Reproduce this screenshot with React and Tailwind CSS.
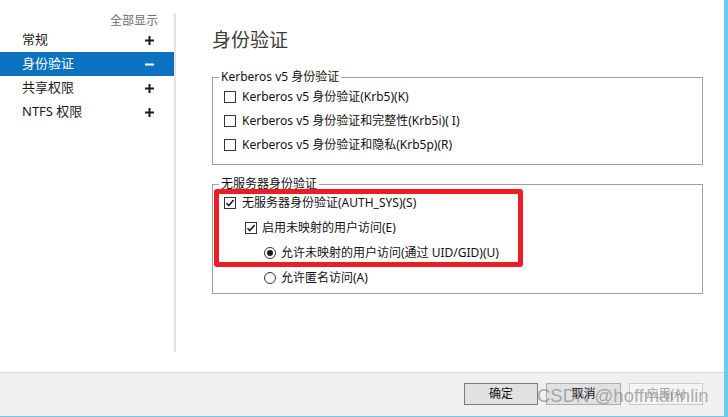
import React from "react";

const FONT = { fontFamily: '"Noto Sans", "Noto Sans CJK SC", sans-serif' };

function Plus() {
  return (
    <svg width="9" height="9" viewBox="0 0 9 9">
      <path d="M4.5 0v9M0 4.5h9" stroke="#1a1a1a" strokeWidth="2" />
    </svg>
  );
}

function Minus() {
  return (
    <svg width="9" height="9" viewBox="0 0 9 9">
      <path d="M0 4.5h9" stroke="#ffffff" strokeWidth="2" />
    </svg>
  );
}

function Check({ checked }) {
  return (
    <span className="w-[12px] h-[12px] border border-[#333] bg-white flex items-center justify-center shrink-0">
      {checked && (
        <svg width="10" height="10" viewBox="0 0 10 10">
          <path d="M1.5 5.2l2.3 2.4L8.6 2" fill="none" stroke="#1a1a1a" strokeWidth="1.6" />
        </svg>
      )}
    </span>
  );
}

function Radio({ checked }) {
  return (
    <span className="w-[12px] h-[12px] rounded-full border border-[#333] bg-white flex items-center justify-center shrink-0">
      {checked && <span className="w-[6px] h-[6px] rounded-full bg-[#1a1a1a]" />}
    </span>
  );
}

function Row({ children, label }) {
  return (
    <div className="flex items-center gap-[6px] h-[24px]">
      {children}
      <span className="text-[12px] text-[#111] whitespace-nowrap">{label}</span>
    </div>
  );
}

const navItems = [
  { label: "常规", open: false },
  { label: "身份验证", open: true },
  { label: "共享权限", open: false },
  { label: "NTFS 权限", open: false },
];

export default function App() {
  return (
    <div
      className="w-[728px] h-[417px] flex flex-col bg-white border-r-4 border-b border-[#6ccaec] overflow-hidden"
      style={FONT}
    >
      <div className="flex flex-1 min-h-0">
        <aside className="w-[176px] shrink-0 pt-[13px]">
          <div className="h-[339px] border-r-2 border-[#e3e3e3]">
            <div className="h-[15px] leading-[15px] text-right pr-[16px] text-[12px] text-[#6d6d6d]">
              全部显示
            </div>
            {navItems.map((item) => (
              <div
                key={item.label}
                className={`h-[24px] flex items-center justify-between pl-[22px] pr-[20px] text-[13px] ${
                  item.open ? "bg-[#0b72c0] text-white" : "text-[#1a1a1a]"
                }`}
              >
                <span>{item.label}</span>
                {item.open ? <Minus /> : <Plus />}
              </div>
            ))}
          </div>
        </aside>

        <main className="flex-1 pl-[36px] pr-[21px]">
          <h1 className="mt-[27px] text-[19px] leading-[26px] text-[#3c3c3c] font-normal">身份验证</h1>

          <fieldset className="mt-[16px] border border-[#a0a0a0] pl-[11px] pb-[7px]">
            <legend className="-ml-[5px] px-[2px] text-[12px] leading-[16px] text-[#111]">
              Kerberos v5 身份验证
            </legend>
            <Row label="Kerberos v5 身份验证(Krb5)(K)">
              <Check />
            </Row>
            <Row label="Kerberos v5 身份验证和完整性(Krb5i)( I)">
              <Check />
            </Row>
            <Row label="Kerberos v5 身份验证和隐私(Krb5p)(R)">
              <Check />
            </Row>
          </fieldset>

          <div className="relative mt-[11px]">
            <fieldset className="border border-[#a0a0a0] pl-[11px] pb-[3px]">
              <legend className="-ml-[5px] px-[2px] text-[12px] leading-[16px] text-[#111]">
                无服务器身份验证
              </legend>
              <div className="-mt-[2px] flex flex-col">
                <div className="h-[25px] flex items-center gap-[6px]">
                  <Check checked />
                  <span className="text-[12px] text-[#111] whitespace-nowrap">无服务器身份验证(AUTH_SYS)(S)</span>
                </div>
                <div className="h-[25px] flex items-center gap-[5px] pl-[21px]">
                  <Check checked />
                  <span className="text-[12px] text-[#111] whitespace-nowrap">启用未映射的用户访问(E)</span>
                </div>
                <div className="h-[25px] flex items-center gap-[5px] pl-[40px]">
                  <Radio checked />
                  <span className="text-[12px] text-[#111] whitespace-nowrap">允许未映射的用户访问(通过 UID/GID)(U)</span>
                </div>
                <div className="h-[25px] flex items-center gap-[5px] pl-[40px]">
                  <Radio />
                  <span className="text-[12px] text-[#111] whitespace-nowrap">允许匿名访问(A)</span>
                </div>
              </div>
            </fieldset>
            <div className="absolute left-[2px] top-[13px] w-[309px] h-[78px] border-[5px] border-[#ee1c25] rounded-[3px] pointer-events-none" />
          </div>
        </main>
      </div>

      <footer className="relative h-[44px] shrink-0 border-t border-[#dadada] bg-[#f0f0f0] flex justify-end items-start gap-[8px] pt-[10px] pr-[21px]">
        <button className="w-[74px] h-[22px] border border-[#7a7a7a] bg-[#e1e1e1] text-[12px] text-[#111]">确定</button>
        <button className="w-[75px] h-[22px] border border-[#adadad] bg-[#e1e1e1] text-[12px] text-[#111]">取消</button>
        <button className="w-[74px] h-[22px] border border-[#cccccc] bg-[#f4f4f4] text-[12px] text-[#a3a3a3]">应用(A)</button>
        <span
          className="absolute left-[537px] top-[11px] text-[18.5px] leading-[24px] text-[#8a8a8a]/70 whitespace-nowrap pointer-events-none"
          style={{ fontFamily: '"Liberation Sans", Arial, sans-serif' }}
        >
          CSDN @hoffmannlin
        </span>
      </footer>
    </div>
  );
}
